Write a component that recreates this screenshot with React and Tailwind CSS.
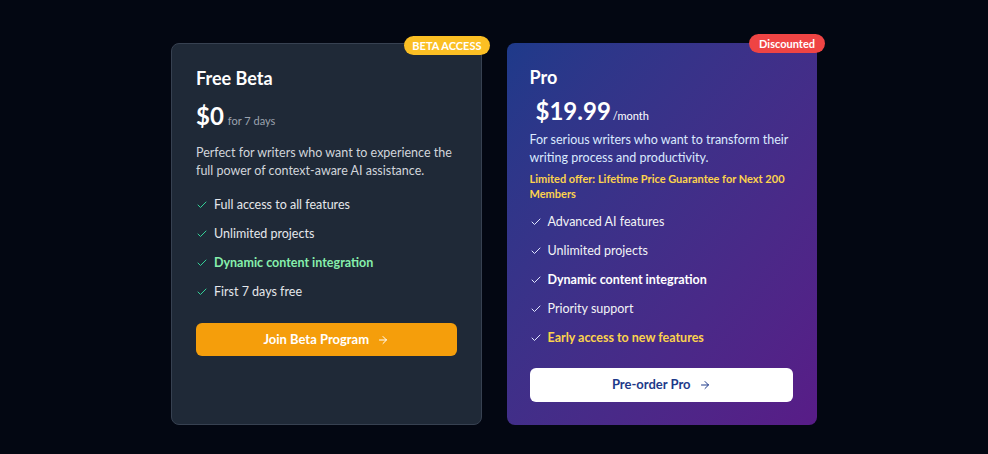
import React from 'react';
import { Check, ArrowRight } from 'lucide-react';

const freeFeatures = [
  { text: 'Full access to all features' },
  { text: 'Unlimited projects' },
  { text: 'Dynamic content integration', highlight: true },
  { text: 'First 7 days free' },
];

const proFeatures = [
  { text: 'Advanced AI features' },
  { text: 'Unlimited projects' },
  { text: 'Dynamic content integration', bold: true },
  { text: 'Priority support' },
  { text: 'Early access to new features', gold: true },
];

const App = () => {
  return (
    <div
      className="min-h-screen bg-[#030712] flex justify-center pt-[43px]"
      style={{ fontFamily: 'Lato, "Open Sans", sans-serif' }}
    >
      <div className="grid grid-cols-2 gap-[25px] w-[646px] h-[382px]">
        {/* Free beta card */}
        <div className="relative bg-[#1f2937] border border-[#374151] rounded-lg px-6 pt-5">
          <span className="absolute -top-2 -right-[9px] bg-[#fbbf24] text-white text-[11px] font-bold rounded-full px-2 py-[2px] leading-[15px]">
            BETA ACCESS
          </span>
          <h3 className="text-white text-lg font-bold leading-7">Free Beta</h3>
          <div className="flex items-baseline mt-2">
            <span className="text-white text-2xl font-bold">$0</span>
            <span className="text-[#9ca3af] text-[11px] ml-1">for 7 days</span>
          </div>
          <p className="text-[#d1d5db] text-[12.5px] leading-[18px] mt-3">
            Perfect for writers who want to experience the full power of context-aware AI assistance.
          </p>
          <ul className="mt-[15px] flex flex-col gap-[9px]">
            {freeFeatures.map((f) => (
              <li key={f.text} className="flex items-center gap-1.5 text-[12.5px] leading-5">
                <Check className="w-3 h-3 text-[#34d399]" strokeWidth={2} />
                <span className={f.highlight ? 'text-[#86efac] font-bold' : 'text-[#e5e7eb]'}>{f.text}</span>
              </li>
            ))}
          </ul>
          <button className="mt-[21px] w-full h-[33px] rounded-md bg-[#f59e0b] text-white text-[13px] font-bold flex items-center justify-center gap-2">
            Join Beta Program <ArrowRight className="w-3 h-3" />
          </button>
        </div>

        {/* Pro card */}
        <div className="relative rounded-lg bg-linear-to-br from-[#1e3a8a] to-[#581c87] pl-[23px] pr-6 pt-5">
          <span className="absolute -top-[9px] -right-2 bg-[#ef4444] text-white text-[11px] font-bold rounded-full px-2.5 py-[2px] leading-[15px]">
            Discounted
          </span>
          <h3 className="text-white text-lg font-bold leading-7">Pro</h3>
          <div className="flex items-baseline mt-1 pl-1.5">
            <span className="text-white text-2xl font-bold">$19.99</span>
            <span className="text-white text-[11px] ml-0.5">/month</span>
          </div>
          <p className="text-[#dbeafe] text-[12.5px] leading-[18px] mt-1">
            For serious writers who want to transform their writing process and productivity.
          </p>
          <p className="text-[#fcd34d] text-[11px] font-bold leading-[15px] mt-1">
            Limited offer: Lifetime Price Guarantee for Next 200 Members
          </p>
          <ul className="mt-[11px] flex flex-col gap-[9px]">
            {proFeatures.map((f) => (
              <li key={f.text} className="flex items-center gap-1.5 text-[12.5px] leading-5">
                <Check className="w-3 h-3 text-[#e0e7ff]" strokeWidth={2} />
                <span
                  className={
                    f.gold ? 'text-[#fcd34d] font-bold' : f.bold ? 'text-white font-bold' : 'text-[#f3f4f6]'
                  }
                >
                  {f.text}
                </span>
              </li>
            ))}
          </ul>
          <button className="mt-[20px] w-full h-[34px] rounded-md bg-white text-[#1e3a8a] text-[13px] font-bold flex items-center justify-center gap-2">
            Pre-order Pro <ArrowRight className="w-3 h-3" />
          </button>
        </div>
      </div>
    </div>
  );
};

export default App;
